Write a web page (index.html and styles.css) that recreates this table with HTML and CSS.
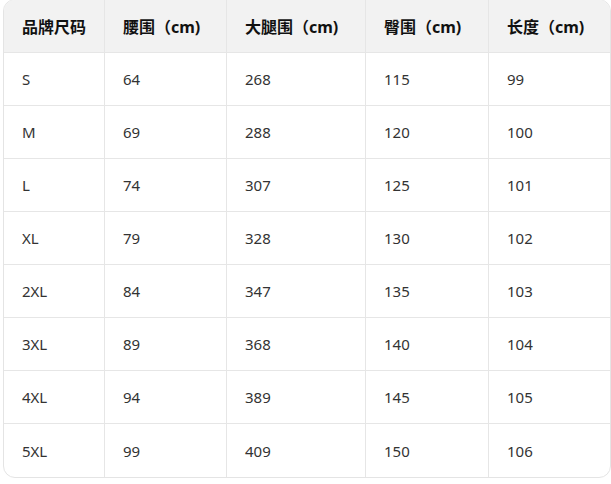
FILE: index.html
```html
<!DOCTYPE html>
<html lang="zh">
<head>
<meta charset="utf-8">
<link rel="stylesheet" href="styles.css">
</head>
<body>
<div class="wrap">
<table class="size-table">
<thead>
<tr><th class="c1">品牌尺码</th><th class="c2">腰围（cm)</th><th class="c3">大腿围（cm)</th><th class="c4">臀围（cm)</th><th class="c5">长度（cm)</th></tr>
</thead>
<tbody>
<tr><td>S</td><td>64</td><td>268</td><td>115</td><td>99</td></tr>
<tr><td>M</td><td>69</td><td>288</td><td>120</td><td>100</td></tr>
<tr><td>L</td><td>74</td><td>307</td><td>125</td><td>101</td></tr>
<tr><td>XL</td><td>79</td><td>328</td><td>130</td><td>102</td></tr>
<tr><td>2XL</td><td>84</td><td>347</td><td>135</td><td>103</td></tr>
<tr><td>3XL</td><td>89</td><td>368</td><td>140</td><td>104</td></tr>
<tr><td>4XL</td><td>94</td><td>389</td><td>145</td><td>105</td></tr>
<tr><td>5XL</td><td>99</td><td>409</td><td>150</td><td>106</td></tr>
</tbody>
</table>
</div>
</body>
</html>
```
FILE: styles.css
```css
html, body {
  margin: 0;
  padding: 0;
  background: #fff;
}
body {
  padding-left: 3px;
  font-family: "Noto Sans", "Noto Sans CJK SC", sans-serif;
}
.wrap {
  width: 608px;
  box-sizing: border-box;
  margin-top: -1px;
  border: 1px solid #e4e4e4;
  border-radius: 12px;
  overflow: hidden;
}
.size-table {
  border-collapse: separate;
  border-spacing: 0;
  table-layout: fixed;
  width: 606px;
}
.size-table th,
.size-table td {
  box-sizing: border-box;
  height: 53px;
  padding: 0 0 0 18px;
  text-align: left;
  vertical-align: middle;
  border-right: 1px solid #e6e6e6;
  border-bottom: 1px solid #e6e6e6;
  white-space: nowrap;
}
.size-table th:last-child,
.size-table td:last-child {
  border-right: none;
}
.size-table tbody tr:last-child td {
  border-bottom: none;
}
.size-table th {
  background: #f2f2f2;
  font-family: "Noto Sans", "Noto Sans CJK SC", sans-serif;
  font-weight: 700;
  font-size: 16px;
  color: #111;
}
.size-table td {
  font-size: 15px;
  color: #333;
  height: 53px;
}
.c1 { width: 101px; }
.c2 { width: 122px; }
.c3 { width: 139px; }
.c4 { width: 123px; }
.c5 { width: 121px; }
```
